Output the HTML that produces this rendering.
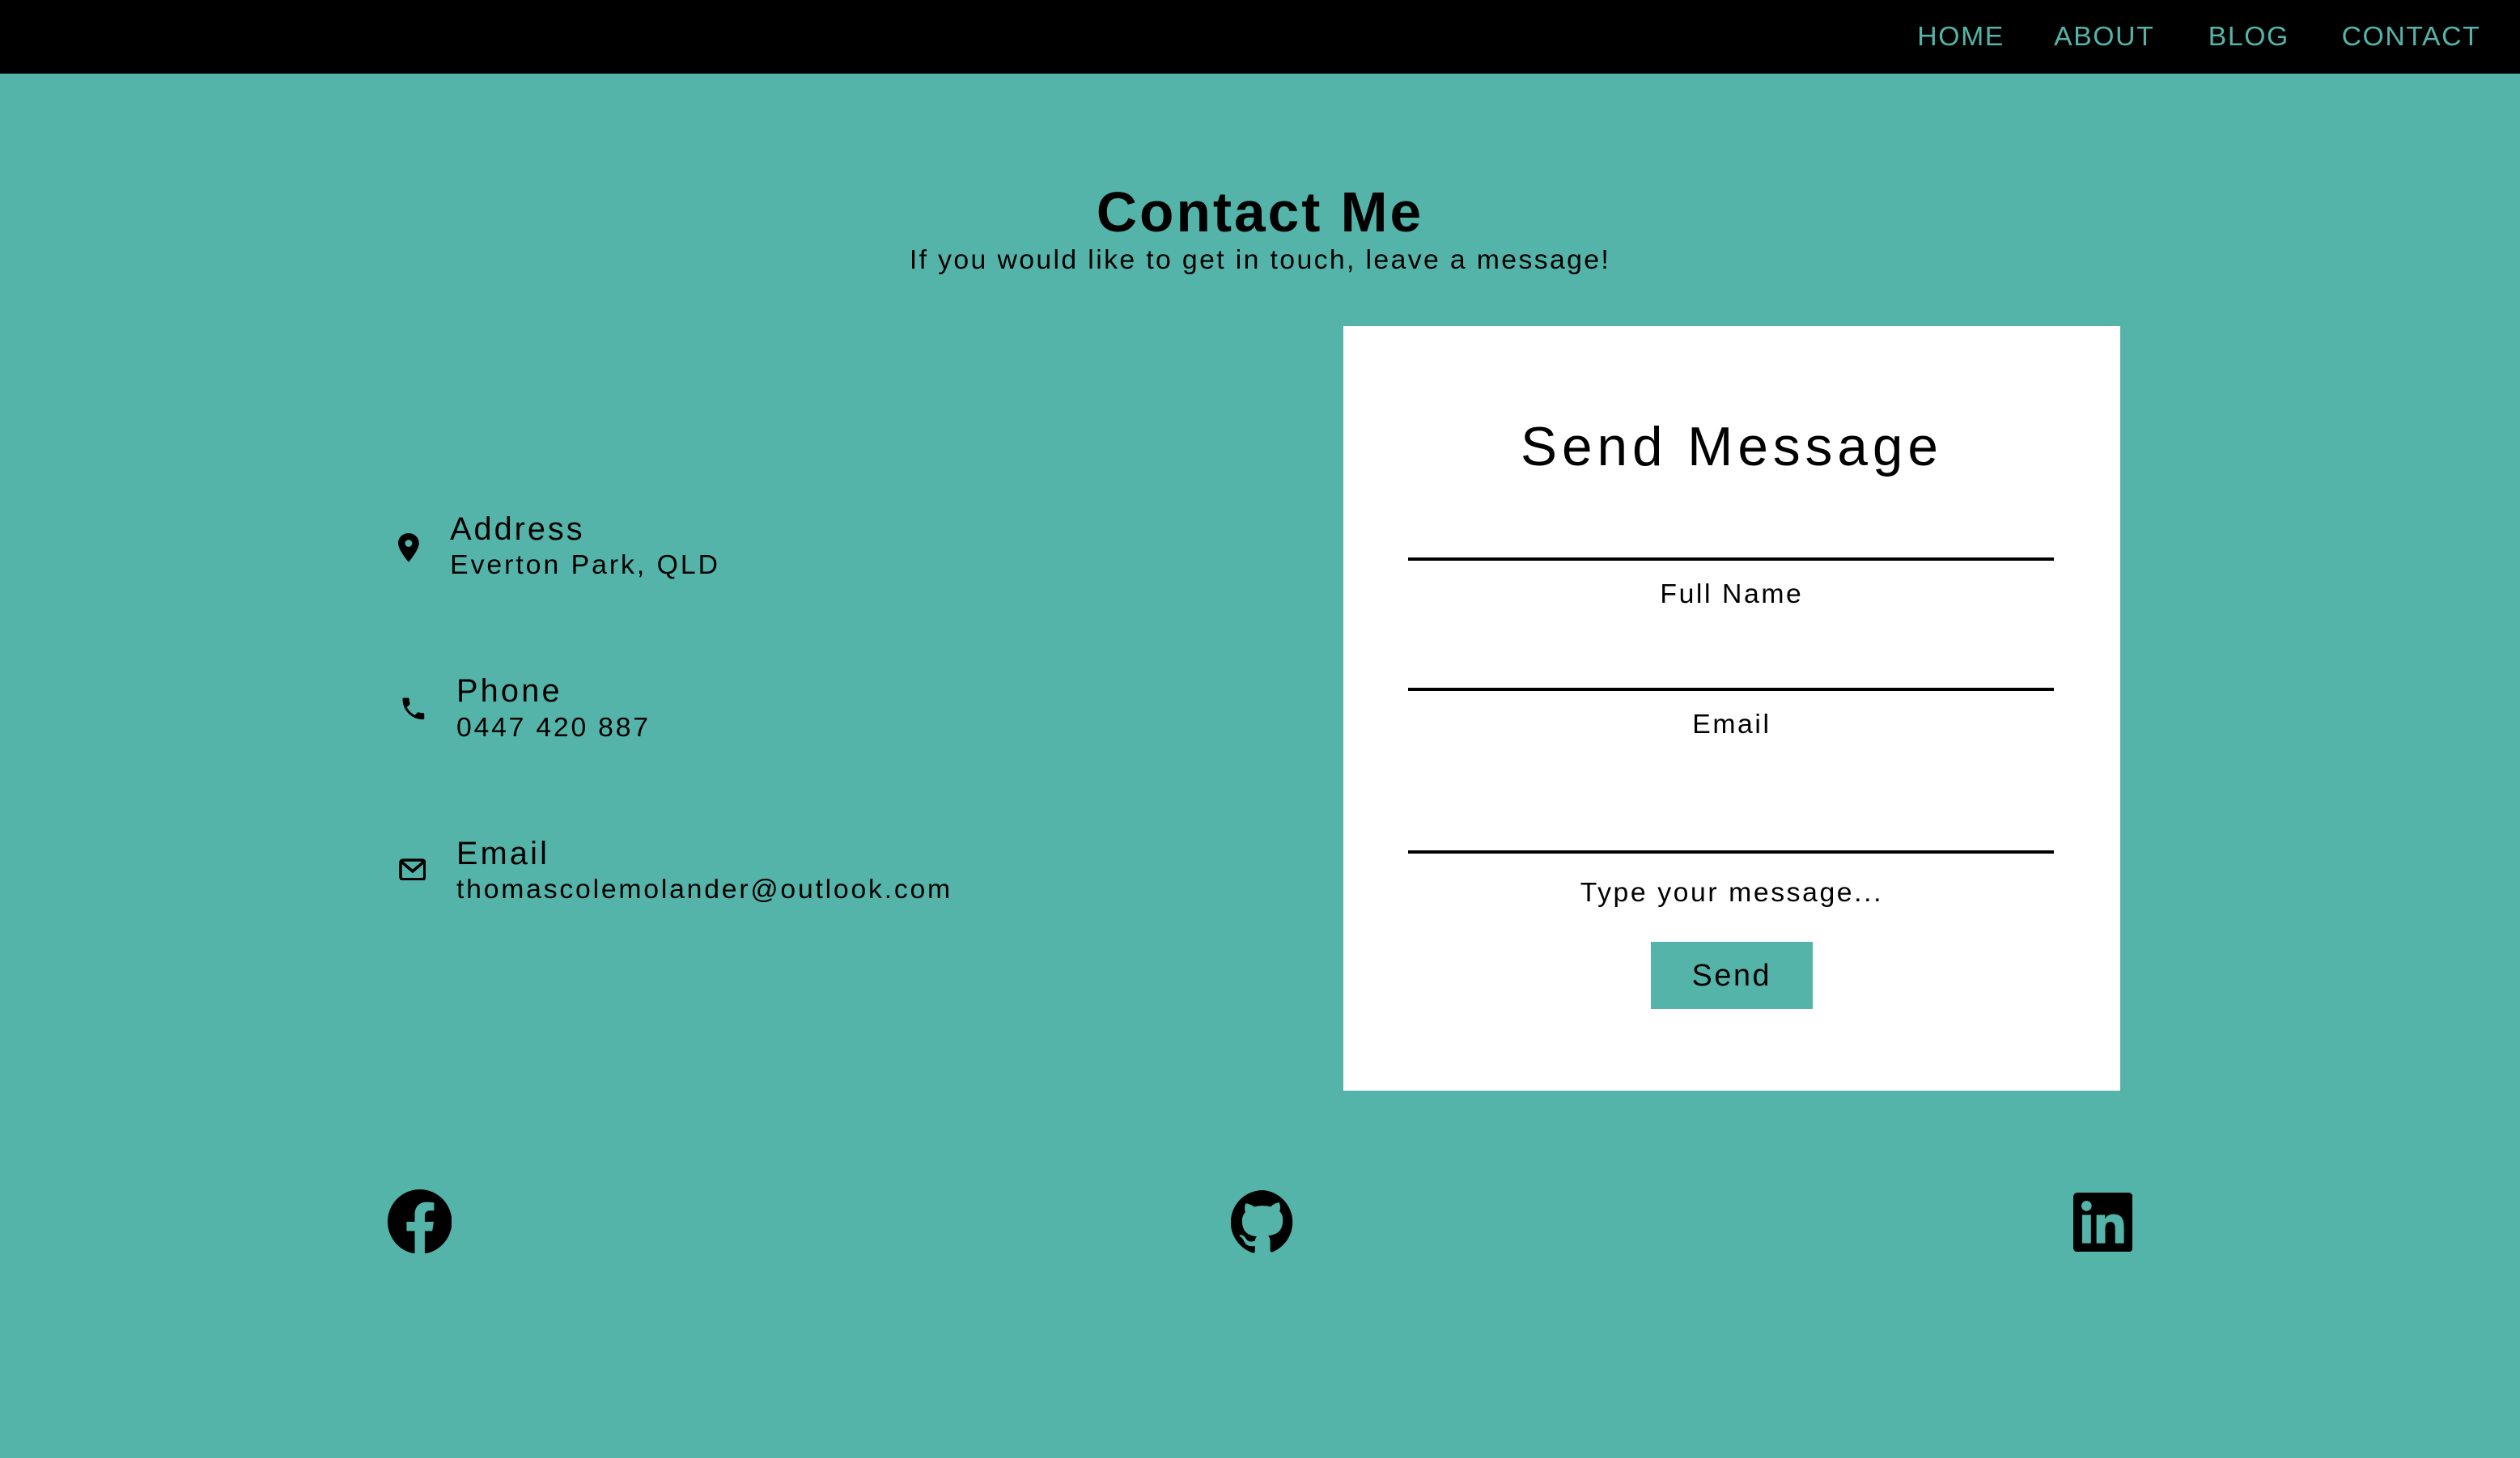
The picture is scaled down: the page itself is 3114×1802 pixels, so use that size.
<!DOCTYPE html>
<html><head><meta charset="utf-8"><style>
html,body{margin:0;padding:0}
body{width:1568px;height:907px;zoom:1.986;background:#54b4a9;position:relative;overflow:hidden;font-family:"Liberation Sans",sans-serif;color:#000;letter-spacing:1.3px}
.a{position:absolute;white-space:nowrap}
nav{position:absolute;left:0;top:0;width:1568px;height:46px;background:#000}
nav span{position:absolute;top:13px;font-size:17px;color:#54b4a9;letter-spacing:0.8px}
.card{position:absolute;left:836px;top:203px;width:483px;height:476px;background:#fff}
.line{position:absolute;left:40px;width:402px;height:2px;background:#000}
.lbl{position:absolute;left:0;width:483px;text-align:center;font-size:17px}
</style></head><body>
<nav>
<span style="left:1193px">HOME</span>
<span style="left:1278px">ABOUT</span>
<span style="left:1374px">BLOG</span>
<span style="left:1457px">CONTACT</span>
</nav>
<div class="a" style="left:0;width:1568px;text-align:center;top:112px;font-size:35px;font-weight:bold;letter-spacing:1.5px">Contact Me</div>
<div class="a" style="left:0;width:1568px;text-align:center;top:152px;font-size:17px;letter-spacing:1.2px">If you would like to get in touch, leave a message!</div>

<svg class="a" style="left:247px;top:332px" width="14" height="18" viewBox="0 0 14 18"><path d="M7 0C3.2 0 .5 2.8.5 6.3.5 10.5 7 18 7 18s6.5-7.5 6.5-11.7C13.5 2.8 10.8 0 7 0zm0 8.5a2.2 2.2 0 1 1 0-4.4 2.2 2.2 0 0 1 0 4.4z"/></svg>
<div class="a" style="left:280px;top:318px;font-size:20px;letter-spacing:1.5px">Address</div>
<div class="a" style="left:280px;top:342px;font-size:17px;letter-spacing:1.5px">Everton Park, QLD</div>

<svg class="a" style="left:248px;top:432px" width="18" height="18" viewBox="0 0 24 24"><path d="M6.6 10.8c1.4 2.8 3.8 5.1 6.6 6.6l2.2-2.2c.3-.3.7-.4 1-.2 1.1.4 2.3.6 3.6.6.6 0 1 .4 1 1V20c0 .6-.4 1-1 1C10.6 21 3 13.4 3 4c0-.6.4-1 1-1h3.5c.6 0 1 .4 1 1 0 1.3.2 2.5.6 3.6.1.3 0 .7-.2 1z"/></svg>
<div class="a" style="left:284px;top:419px;font-size:20px;letter-spacing:1.6px">Phone</div>
<div class="a" style="left:284px;top:443px;font-size:17px;letter-spacing:1.4px">0447 420 887</div>

<svg class="a" style="left:248px;top:534px" width="17" height="14" viewBox="0 0 17 14"><rect x="1" y="1" width="15" height="12" rx="1.5" fill="none" stroke="#000" stroke-width="1.8"/><path d="M1.5 2l7 6 7-6" fill="none" stroke="#000" stroke-width="1.8"/></svg>
<div class="a" style="left:284px;top:520px;font-size:20px;letter-spacing:1.6px">Email</div>
<div class="a" style="left:284px;top:544px;font-size:17px;letter-spacing:1.4px">thomascolemolander@outlook.com</div>

<div class="card">
<div class="lbl" style="top:56px;font-size:34px;letter-spacing:3px">Send Message</div>
<div class="line" style="top:144px"></div>
<div class="lbl" style="top:157px">Full Name</div>
<div class="line" style="top:225px"></div>
<div class="lbl" style="top:238px">Email</div>
<div class="line" style="top:326px"></div>
<div class="lbl" style="top:343px">Type your message...</div>
<div style="position:absolute;left:191px;top:383px;width:101px;height:42px;background:#54b4a9;text-align:center;line-height:42px;font-size:19px">Send</div>
</div>

<svg class="a" style="left:241px;top:740px" width="40" height="40" viewBox="0 0 24 24"><path d="M24 12.07C24 5.41 18.63 0 12 0S0 5.4 0 12.07C0 18.1 4.39 23.1 10.13 24v-8.44H7.08v-3.49h3.04V9.41c0-3.02 1.8-4.7 4.54-4.7 1.31 0 2.68.24 2.68.24v2.97h-1.5c-1.5 0-1.96.93-1.96 1.89v2.26h3.32l-.53 3.5h-2.8V24C19.62 23.1 24 18.1 24 12.07"/></svg>
<svg class="a" style="left:766px;top:740px" width="40" height="40" viewBox="0 0 24 24"><path d="M12 .3a12 12 0 0 0-3.8 23.4c.6.1.8-.3.8-.6v-2c-3.3.7-4-1.6-4-1.6-.6-1.4-1.4-1.8-1.4-1.8-1-.7.1-.7.1-.7 1.2.1 1.8 1.2 1.8 1.2 1 1.8 2.8 1.3 3.5 1 .1-.8.4-1.3.7-1.6-2.7-.3-5.5-1.3-5.5-5.9 0-1.3.5-2.4 1.2-3.2-.1-.3-.5-1.5.1-3.2 0 0 1-.3 3.3 1.2a11.5 11.5 0 0 1 6 0C17.1 4.6 18.1 5 18.1 5c.6 1.7.2 2.9.1 3.2.8.8 1.2 1.9 1.2 3.2 0 4.6-2.8 5.6-5.5 5.9.4.4.8 1.1.8 2.2v3.3c0 .3.2.7.8.6A12 12 0 0 0 12 .3"/></svg>
<svg class="a" style="left:1290px;top:742px" width="37" height="37" viewBox="0 0 24 24"><path d="M20.45 20.45h-3.56v-5.57c0-1.33-.02-3.04-1.85-3.04-1.85 0-2.14 1.45-2.14 2.94v5.67H9.35V9h3.41v1.56h.05c.48-.9 1.64-1.85 3.37-1.85 3.6 0 4.27 2.37 4.27 5.46zM5.34 7.43a2.06 2.06 0 1 1 0-4.13 2.06 2.06 0 0 1 0 4.13zM7.12 20.45H3.56V9h3.56zM22.22 0H1.77C.79 0 0 .77 0 1.73v20.54C0 23.23.79 24 1.77 24h20.45c.98 0 1.78-.77 1.78-1.73V1.73C24 .77 23.2 0 22.22 0z"/></svg>
</body></html>
